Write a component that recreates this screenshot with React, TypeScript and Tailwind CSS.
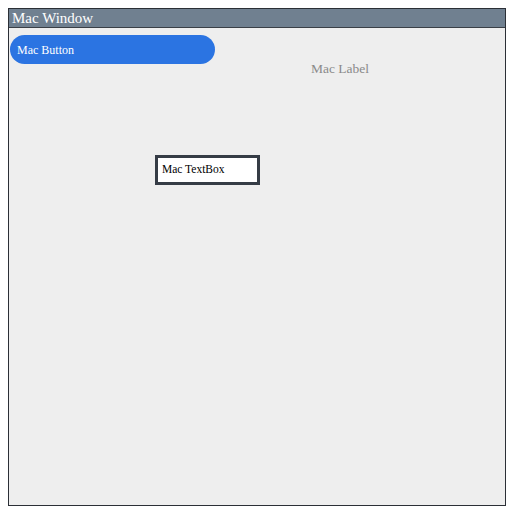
import React from 'react';

const serif = { fontFamily: '"Liberation Serif", "Times New Roman", serif' };

export default function App() {
  return (
    <div className="w-[515px] h-[515px] bg-white p-2" style={serif}>
      <div className="w-[498px] h-[498px] border border-[#2b2f36] bg-[#eeeeee] flex flex-col">
        {/* title bar */}
        <div className="h-[19px] bg-[#708090] border-b border-[#3a3f46] text-white text-[15px] leading-[19px] pl-[3px] shrink-0">
          Mac Window
        </div>
        <div className="flex-1 flex flex-col items-start">
          <div className="flex items-start">
            <button className="mt-[7px] ml-px w-[205px] h-[29px] rounded-full bg-[#2b74e2] text-white text-[12px] text-left pl-[7px]">
              Mac Button
            </button>
            <span className="ml-[96px] mt-[34px] text-[13.5px] text-[#8a8a8a] leading-none">Mac Label</span>
          </div>
          <div className="ml-[146px] mt-[79px] w-[105px] h-[30px] border-[3px] border-[#353c45] bg-white text-black text-[11.5px] pl-[4px] flex items-center">
            Mac TextBox
          </div>
        </div>
      </div>
    </div>
  );
}
